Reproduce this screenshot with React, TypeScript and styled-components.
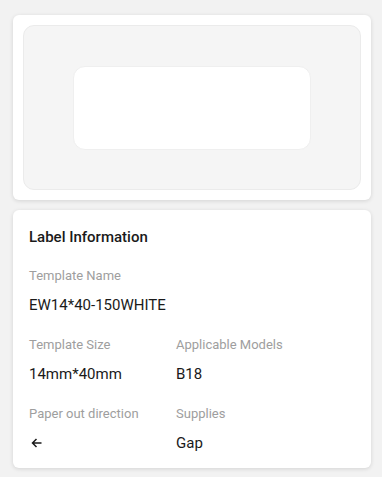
import React from "react";
import styled, { createGlobalStyle } from "styled-components";

const Global = createGlobalStyle`
  html, body { margin: 0; padding: 0; background: #f2f2f2; }
  body { font-family: Roboto, "Noto Sans", sans-serif; -webkit-font-smoothing: antialiased; }
  * { box-sizing: border-box; }
`;

const Page = styled.div`
  width: 382px;
  min-height: 477px;
  padding: 15px 11px 9px 13px;
  display: flex;
  flex-direction: column;
  gap: 10px;
`;

const Card = styled.div`
  background: #ffffff;
  border-radius: 6px;
  box-shadow: 0 1px 4px rgba(0, 0, 0, 0.13);
  width: 358px;
`;

const PreviewCard = styled(Card)`
  height: 185px;
  padding: 10px;
  display: flex;
`;

const Canvas = styled.div`
  flex: 1;
  background: #f5f5f5;
  border: 1px solid #ebebeb;
  border-radius: 11px;
  display: flex;
  align-items: center;
  justify-content: center;
`;

const LabelShape = styled.div`
  width: 238px;
  height: 84px;
  background: #ffffff;
  border: 1px solid #efefef;
  border-radius: 12px;
`;

const InfoCard = styled(Card)`
  height: 258px;
  padding: 17px 16px 15px 16px;
  display: flex;
  flex-direction: column;
`;

const Title = styled.div`
  font-size: 15px;
  line-height: 20px;
  font-weight: 500;
  color: #1a1a1a;
  margin-bottom: 20px;
`;

const Grid = styled.div`
  display: grid;
  grid-template-columns: 147px 1fr;
  row-gap: 21px;
`;

const Field = styled.div<{ $full?: boolean }>`
  display: flex;
  flex-direction: column;
  gap: 10px;
  grid-column: ${(p) => (p.$full ? "1 / -1" : "auto")};
`;

const FieldLabel = styled.div`
  font-size: 13px;
  line-height: 18px;
  color: #9e9e9e;
`;

const FieldValue = styled.div`
  font-size: 15px;
  line-height: 20px;
  color: #1a1a1a;
  display: flex;
  align-items: center;
  height: 20px;
`;

const Arrow = () => (
  <svg width="11" height="10" viewBox="0 0 11 10" style={{ marginLeft: 2 }}>
    <path d="M10.5 5H1.5M5.5 1L1.5 5L5.5 9" fill="none" stroke="#1a1a1a" strokeWidth="1.5" />
  </svg>
);

export default function App() {
  return (
    <>
      <Global />
      <Page>
        <PreviewCard>
          <Canvas>
            <LabelShape />
          </Canvas>
        </PreviewCard>
        <InfoCard>
          <Title>Label Information</Title>
          <Grid>
            <Field $full>
              <FieldLabel>Template Name</FieldLabel>
              <FieldValue>EW14*40-150WHITE</FieldValue>
            </Field>
            <Field>
              <FieldLabel>Template Size</FieldLabel>
              <FieldValue>14mm*40mm</FieldValue>
            </Field>
            <Field>
              <FieldLabel>Applicable Models</FieldLabel>
              <FieldValue>B18</FieldValue>
            </Field>
            <Field>
              <FieldLabel>Paper out direction</FieldLabel>
              <FieldValue>
                <Arrow />
              </FieldValue>
            </Field>
            <Field>
              <FieldLabel>Supplies</FieldLabel>
              <FieldValue>Gap</FieldValue>
            </Field>
          </Grid>
        </InfoCard>
      </Page>
    </>
  );
}
